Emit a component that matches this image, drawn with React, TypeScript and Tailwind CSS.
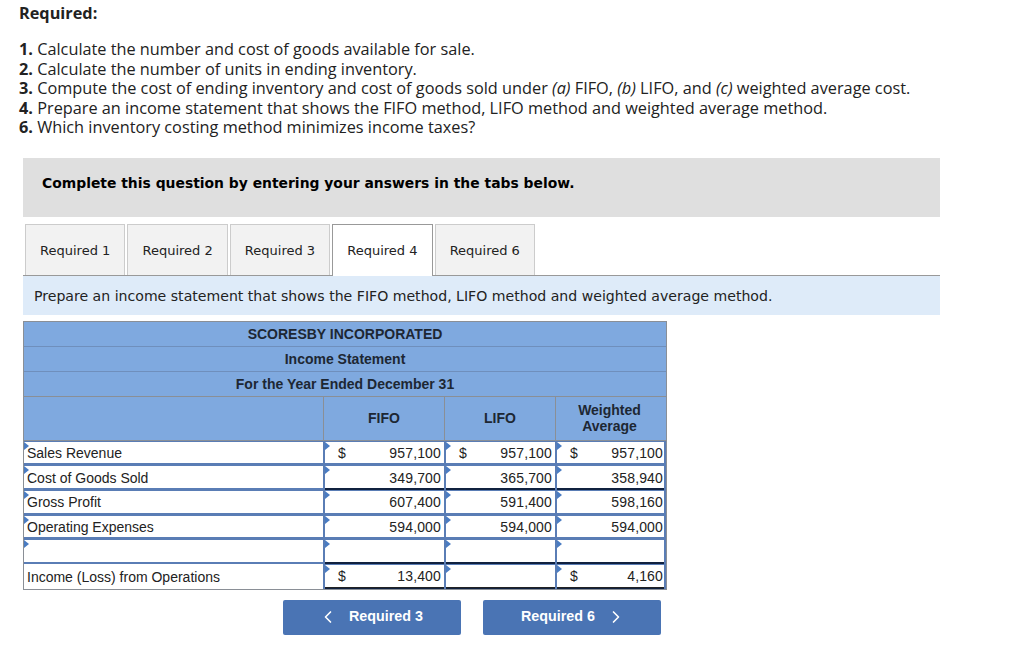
import React from 'react';
import { ChevronLeft, ChevronRight } from 'lucide-react';

const tabs = ['Required 1', 'Required 2', 'Required 3', 'Required 4', 'Required 6'];

type Row = {
  label: string;
  values: (string | null)[];
  dollar?: boolean;
  line?: 'single' | 'double';
  plain?: boolean;
};

const rows: Row[] = [
  { label: 'Sales Revenue', values: ['957,100', '957,100', '957,100'], dollar: true },
  { label: 'Cost of Goods Sold', values: ['349,700', '365,700', '358,940'], line: 'single' },
  { label: 'Gross Profit', values: ['607,400', '591,400', '598,160'] },
  { label: 'Operating Expenses', values: ['594,000', '594,000', '594,000'] },
  { label: '', values: [null, null, null], line: 'single' },
  { label: 'Income (Loss) from Operations', values: ['13,400', null, '4,160'], dollar: true, line: 'double', plain: true },
];

const Marker = () => (
  <span className="absolute left-0 top-0 w-0 h-0 border-y-[4px] border-y-transparent border-l-[5px] border-l-[#4a7cc2]" />
);

const ValueCell = ({ value, dollar, line, last }: { value: string | null; dollar?: boolean; line?: Row['line']; last?: boolean }) => (
  <div
    className={
      last
        ? 'relative bg-white border-l-2 border-r-2 border-t border-b-2 border-[#5a7db5] flex items-center justify-between pt-[1px] pr-[1px] pl-[13px] text-[#222]'
        : 'relative bg-white border-l-2 border-t border-b-2 border-[#5a7db5] flex items-center justify-between pt-[1px] pr-[3px] pl-[13px] text-[#222]'
    }
  >
    <Marker />
    <span>{dollar && value ? '$' : ''}</span>
    <span className="tracking-[0.15px]">{value}</span>
    {line && <span className="absolute left-0 right-0 bottom-[-2px] h-[2px] bg-[#10213f]" />}
    {line === 'double' && <span className="absolute left-0 right-0 bottom-[-1px] h-[1px] bg-[#222]" />}
  </div>
);

export default function App() {
  return (
    <div className="w-[1024px] h-[667px] bg-white overflow-hidden font-['Open_Sans',sans-serif] text-[#222]">
      <div className="px-[19px] pt-[3px] text-[16.3px] leading-[19.5px]">
        <p className="font-bold h-[20px] leading-[20px]">Required:</p>
        <div className="mt-[17px]">
          <p><b>1.</b> Calculate the number and cost of goods available for sale.</p>
          <p><b>2.</b> Calculate the number of units in ending inventory.</p>
          <p><b>3.</b> Compute the cost of ending inventory and cost of goods sold under <i>(a)</i> FIFO, <i>(b)</i> LIFO, and <i>(c)</i> weighted average cost.</p>
          <p><b>4.</b> Prepare an income statement that shows the FIFO method, LIFO method and weighted average method.</p>
          <p><b>6.</b> Which inventory costing method minimizes income taxes?</p>
        </div>
      </div>

      <div className="ml-[23px] mt-[20px] w-[917px] h-[59px] bg-[#dfdfdf] pl-[19px] pt-[15px] font-['DejaVu_Sans',sans-serif] font-bold text-[13.9px] leading-[20px] text-black">
        Complete this question by entering your answers in the tabs below.
      </div>

      <div className="ml-[23px] mt-[7px] w-[917px] font-['DejaVu_Sans',sans-serif] text-[13px]">
        <div className="flex h-[52px] pl-[2px] gap-[2px] border-b border-[#999]">
          {tabs.map((t) => (
            <div
              key={t}
              className={
                t === 'Required 4'
                  ? 'w-[100.4px] h-[52px] pt-[2px] bg-[#fff] border border-b-0 border-[#999] flex items-center justify-center'
                  : 'w-[100.4px] pt-[2px] bg-[#f2f2f2] border border-b-0 border-[#ccc] flex items-center justify-center'
              }
            >
              {t}
            </div>
          ))}
        </div>
        <div className="h-[39px] pt-[3px] bg-[#deebf9] pl-[11px] flex items-center text-[14.1px]">
          Prepare an income statement that shows the FIFO method, LIFO method and weighted average method.
        </div>
      </div>

      <div className="ml-[23px] mt-[6px] w-[644px] font-['Liberation_Sans',sans-serif] text-[14px] border border-[#8a8f96]">
        <div className="bg-[#7fa9df] font-bold text-[#1d2733]">
          <div className="h-[25px] pt-[2px] flex items-center justify-center border-b border-[#6f8fbc]">SCORESBY INCORPORATED</div>
          <div className="h-[25px] pt-[2px] flex items-center justify-center border-b border-[#6f8fbc]">Income Statement</div>
          <div className="h-[25px] pt-[2px] flex items-center justify-center border-b border-[#8a8f96]">For the Year Ended December 31</div>
          <div className="grid grid-cols-[300px_121px_111px_110px] h-[43px]">
            <div className="border-r border-[#8a8f96]" />
            <div className="border-r border-[#8a8f96] flex items-center justify-center">FIFO</div>
            <div className="border-r border-[#8a8f96] flex items-center justify-center">LIFO</div>
            <div className="pr-[3px] flex items-center justify-center text-center leading-[16px]">Weighted<br />Average</div>
          </div>
        </div>
        <div className="border-t border-[#8a8f96]">
          {rows.map((r) => (
            <div key={r.label || 'blank'} className="grid grid-cols-[299px_121px_111px_111px] h-[24.7px] leading-[18px]">
              <div className={r.plain ? 'relative bg-white pt-[1px] pl-[3px] flex items-center' : 'relative bg-white pt-[1px] pl-[3px] flex items-center border-t border-b-2 border-[#5a7db5]'}>
                {!r.plain && <Marker />}
                {r.label}
              </div>
              {r.values.map((v, i) => (
                <ValueCell key={i} value={v} dollar={r.dollar} line={r.line} last={i === 2} />
              ))}
            </div>
          ))}
        </div>
      </div>

      <div className="ml-[283px] mt-[10px] flex gap-[22px] font-['Liberation_Sans',sans-serif] font-bold text-[14.3px] text-white">
        <button className="w-[178px] h-[35px] pr-[3px] bg-[#4a74b4] rounded-[2px] flex items-center justify-center gap-[11px]">
          <ChevronLeft className="w-[20px] h-[20px]" />
          Required 3
        </button>
        <button className="w-[178px] h-[35px] pl-[3px] bg-[#4a74b4] rounded-[2px] flex items-center justify-center gap-[11px]">
          Required 6
          <ChevronRight className="w-[20px] h-[20px]" />
        </button>
      </div>
    </div>
  );
}
